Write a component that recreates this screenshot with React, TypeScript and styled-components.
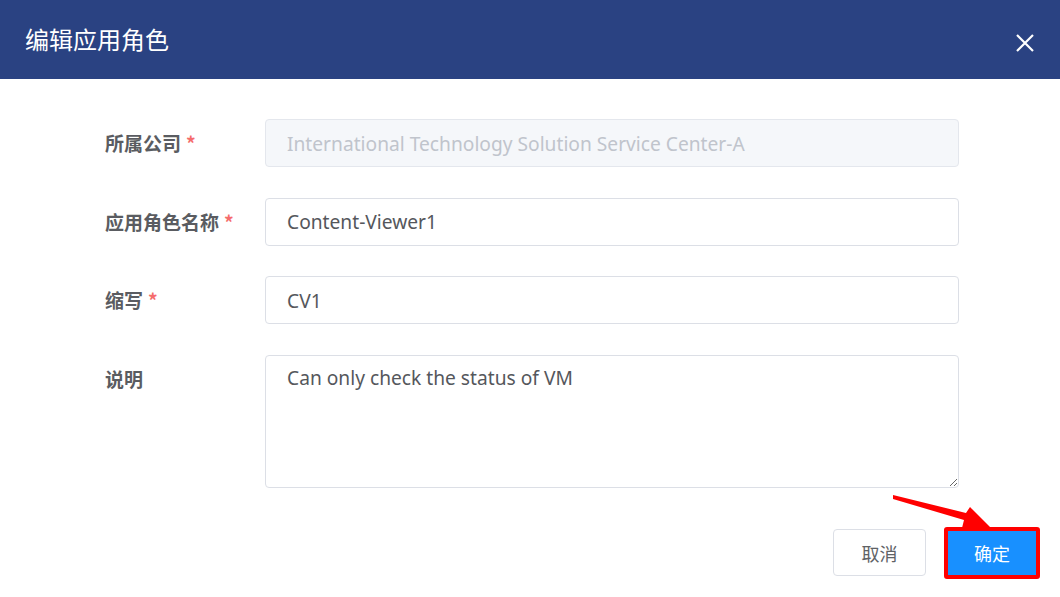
import styled, { createGlobalStyle } from "styled-components";

const GlobalStyle = createGlobalStyle`
  html, body {
    margin: 0;
    padding: 0;
    background: #fff;
  }
  body {
    font-family: "Noto Sans", "Noto Sans CJK SC", sans-serif;
  }
`;

const Dialog = styled.div`
  position: relative;
  width: 1060px;
  height: 597px;
  background: #fff;
  overflow: hidden;
`;

const Header = styled.div`
  height: 79px;
  background: #2a4282;
  display: flex;
  align-items: center;
  justify-content: space-between;
  padding: 0 24px 0 25px;
  box-sizing: border-box;
`;

const Title = styled.h2`
  margin: 0 0 2px;
  font-family: "Noto Sans CJK SC", sans-serif;
  font-size: 24px;
  font-weight: 400;
  color: #fff;
`;

const CloseButton = styled.button`
  border: none;
  background: none;
  padding: 0;
  margin-top: 6px;
  width: 22px;
  height: 22px;
  display: flex;
  align-items: center;
  justify-content: center;
  cursor: pointer;
`;

const Form = styled.div`
  padding: 40px 101px 0 105px;
  display: flex;
  flex-direction: column;
  gap: 30.5px;
`;

const Row = styled.div<{ $top?: boolean }>`
  display: flex;
  align-items: ${(p) => (p.$top ? "flex-start" : "center")};
`;

const Label = styled.label`
  width: 160px;
  flex-shrink: 0;
  line-height: 48px;
  font-family: "Noto Sans CJK SC", sans-serif;
  font-size: 19px;
  font-weight: 700;
  color: #5a5c61;
`;

const Star = styled.span`
  color: #f56c6c;
  margin-left: 5px;
  font-weight: 700;
`;

const Input = styled.input`
  flex: 1;
  height: 48px;
  box-sizing: border-box;
  border: 1px solid #dcdfe6;
  border-radius: 4px;
  padding: 0 21px;
  font-family: "Noto Sans", "Noto Sans CJK SC", sans-serif;
  font-size: 19.2px;
  color: #55575c;
  background: #fff;
  outline: none;

  &:disabled {
    background: #f5f7fa;
    border-color: #e4e7ed;
    color: #c0c4cc;
  }
`;

const TextArea = styled.textarea`
  flex: 1;
  height: 133px;
  box-sizing: border-box;
  border: 1px solid #dcdfe6;
  border-radius: 4px;
  padding: 8px 21px;
  font-family: "Noto Sans", "Noto Sans CJK SC", sans-serif;
  font-size: 19.2px;
  line-height: 1.5;
  color: #55575c;
  resize: vertical;
  outline: none;
`;

const Footer = styled.div`
  display: flex;
  justify-content: flex-end;
  align-items: center;
  gap: 18px;
  padding: 39px 20px 0 0;
`;

const CancelButton = styled.button`
  width: 93px;
  height: 47px;
  border: 1px solid #dcdfe6;
  border-radius: 4px;
  background: #fff;
  font-family: "Noto Sans CJK SC", sans-serif;
  font-size: 18px;
  color: #606266;
  cursor: pointer;
`;

const ConfirmButton = styled.button`
  width: 96px;
  height: 52px;
  box-sizing: border-box;
  border: 4px solid #ff0000;
  border-radius: 3px;
  background: #1890ff;
  font-family: "Noto Sans CJK SC", sans-serif;
  font-size: 18px;
  color: #fff;
  cursor: pointer;
`;

const Arrow = styled.svg`
  position: absolute;
  left: 0;
  top: 0;
  pointer-events: none;
`;

export default function App() {
  return (
    <>
      <GlobalStyle />
      <Dialog>
        <Header>
          <Title>编辑应用角色</Title>
          <CloseButton aria-label="close">
            <svg width="20" height="20" viewBox="0 0 20 20">
              <path d="M2 2 L18 18 M18 2 L2 18" stroke="#fff" strokeWidth="2.2" />
            </svg>
          </CloseButton>
        </Header>

        <Form>
          <Row>
            <Label>
              所属公司<Star>*</Star>
            </Label>
            <Input disabled value="International Technology Solution Service Center-A" readOnly />
          </Row>
          <Row>
            <Label>
              应用角色名称<Star>*</Star>
            </Label>
            <Input value="Content-Viewer1" readOnly />
          </Row>
          <Row>
            <Label>
              缩写<Star>*</Star>
            </Label>
            <Input value="CV1" readOnly />
          </Row>
          <Row $top>
            <Label>说明</Label>
            <TextArea value="Can only check the status of VM" readOnly />
          </Row>
        </Form>

        <Footer>
          <CancelButton>取消</CancelButton>
          <ConfirmButton>确定</ConfirmButton>
        </Footer>

        <Arrow width="1060" height="597">
          <polygon
            points="893,495 966,513 970,507 990,527 962,528 964,520 893,499"
            fill="#ff0000"
          />
        </Arrow>
      </Dialog>
    </>
  );
}
